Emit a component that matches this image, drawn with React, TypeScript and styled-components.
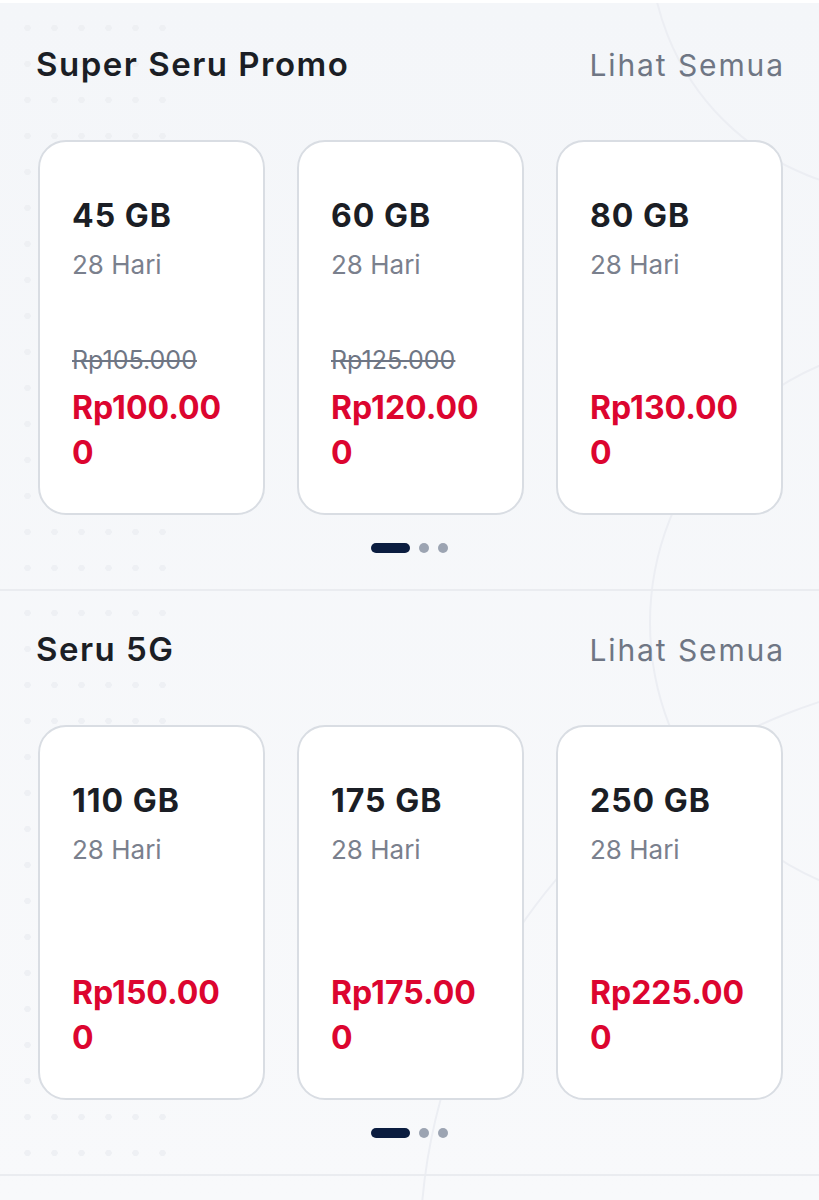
import React from 'react'
import styled, { createGlobalStyle } from 'styled-components'

const GlobalStyle = createGlobalStyle`
    html, body {
        margin: 0;
        padding: 0;
        background: #f6f7fa;
    }
    body {
        font-family: Inter, "Noto Sans", sans-serif;
        -webkit-font-smoothing: antialiased;
    }
`

type Package = {
    quota: string
    days: string
    oldPrice?: string
    price: string
}

const promo: Package[] = [
    { quota: '45 GB', days: '28 Hari', oldPrice: 'Rp105.000', price: 'Rp100.000' },
    { quota: '60 GB', days: '28 Hari', oldPrice: 'Rp125.000', price: 'Rp120.000' },
    { quota: '80 GB', days: '28 Hari', price: 'Rp130.000' },
]

const fiveG: Package[] = [
    { quota: '110 GB', days: '28 Hari', price: 'Rp150.000' },
    { quota: '175 GB', days: '28 Hari', price: 'Rp175.000' },
    { quota: '250 GB', days: '28 Hari', price: 'Rp225.000' },
]

const Page = styled.div`
    position: relative;
    overflow: hidden;
    width: 819px;
    min-height: 1200px;
    padding-top: 3px;
    box-sizing: border-box;
    background: linear-gradient(180deg, #f4f6f9 0%, #f8f9fb 100%);
    border-top: 3px solid #ffffff;
`

const Decor = styled.svg`
    position: absolute;
    inset: 0;
    width: 819px;
    height: 1200px;
    pointer-events: none;
    z-index: 0;
`

const Section = styled.section`
    position: relative;
    z-index: 1;
    padding: 36px 36px 0 38px;
    height: 585px;
    box-sizing: border-box;
    border-bottom: 2px solid #eaecf0;

    &::before {
        content: '';
        position: absolute;
        left: 14px;
        top: 4px;
        width: 170px;
        height: 100%;
        background-image: radial-gradient(circle, #eceef2 3px, transparent 3.5px);
        background-size: 27px 36px;
        z-index: -1;
        opacity: 0.8;
    }
`

const Header = styled.div`
    display: flex;
    align-items: baseline;
    justify-content: space-between;
    margin-left: -2px;
    height: 60px;
`

const Title = styled.h2`
    margin: 0;
    font-size: 33px;
    line-height: 44px;
    font-weight: 600;
    color: #1b1e25;
    letter-spacing: 1.5px;
`

const SeeAll = styled.a`
    font-size: 30px;
    line-height: 44px;
    font-weight: 400;
    color: #6f7684;
    text-decoration: none;
    letter-spacing: 1.9px;
    margin-right: -2px;
`

const Cards = styled.div`
    display: grid;
    grid-template-columns: repeat(3, 1fr);
    gap: 32px;
    margin-top: 38px;
`

const Card = styled.div`
    height: 375px;
    box-sizing: border-box;
    background: #ffffff;
    border: 2px solid #d9dde3;
    border-radius: 28px;
    padding: 54px 20px 38px 32px;
    display: flex;
    flex-direction: column;
`

const Quota = styled.div`
    font-size: 32px;
    line-height: 40px;
    font-weight: 700;
    color: #1b1e25;
    letter-spacing: 1px;
`

const Days = styled.div`
    margin-top: 12px;
    font-size: 26px;
    line-height: 34px;
    color: #7a808d;
`

const Prices = styled.div`
    margin-top: auto;
`

const OldPrice = styled.div`
    font-size: 25px;
    line-height: 34px;
    color: #6f7684;
    text-decoration: line-through;
    margin-bottom: 8px;
`

const Price = styled.div`
    font-size: 32px;
    line-height: 45px;
    font-weight: 700;
    color: #dc052f;
    word-break: break-all;
    max-width: 158px;
`

const Pager = styled.div`
    display: flex;
    justify-content: center;
    align-items: center;
    gap: 9px;
    margin-top: 28px;
    margin-left: -2px;
`

const Dot = styled.span<{ $active?: boolean }>`
    display: block;
    height: 10px;
    width: ${p => (p.$active ? '39px' : '10px')};
    border-radius: 5px;
    background: ${p => (p.$active ? '#0b1d40' : '#9ca4b2')};
`

const PackageCard: React.FC<{ item: Package }> = ({ item }) => (
    <Card>
        <Quota>{item.quota}</Quota>
        <Days>{item.days}</Days>
        <Prices>
            {item.oldPrice && <OldPrice>{item.oldPrice}</OldPrice>}
            <Price>{item.price}</Price>
        </Prices>
    </Card>
)

const PackageSection: React.FC<{ title: string; items: Package[] }> = ({ title, items }) => (
    <Section>
        <Header>
            <Title>{title}</Title>
            <SeeAll href="#!">Lihat Semua</SeeAll>
        </Header>
        <Cards>
            {items.map(item => (
                <PackageCard key={item.quota} item={item} />
            ))}
        </Cards>
        <Pager>
            <Dot $active />
            <Dot />
            <Dot />
        </Pager>
    </Section>
)

const App: React.FC = () => (
    <Page>
        <GlobalStyle />
        <Decor viewBox="0 0 819 1200">
            <g fill="none" stroke="#eceef3" strokeWidth="2">
                <circle cx="900" cy="-60" r="250" />
                <circle cx="930" cy="620" r="280" />
                <circle cx="1000" cy="1250" r="580" />
            </g>
        </Decor>
        <PackageSection title="Super Seru Promo" items={promo} />
        <PackageSection title="Seru 5G" items={fiveG} />
    </Page>
)

export default App
